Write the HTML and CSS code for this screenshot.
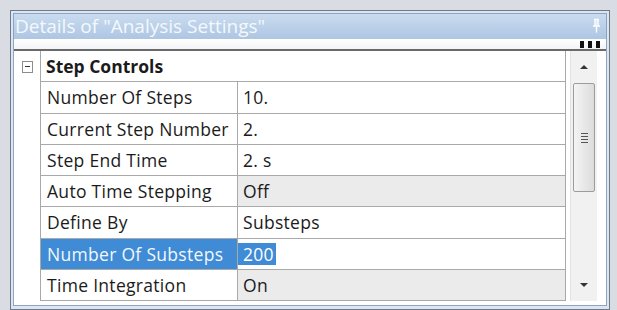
FILE: index.html
```html
<!DOCTYPE html>
<html>
<head>
<meta charset="utf-8">
<link rel="stylesheet" href="styles.css">
</head>
<body>
<div class="frame">
  <div class="panel">
    <div class="titlebar">
      <span class="title">Details of "Analysis Settings"</span>
      <svg class="pin" width="9" height="15" viewBox="0 0 9 15"><path d="M2 1.5h5M3 1.5v6M6 1.5v6M1 8h7M4.5 8v6.5" stroke="#fff" stroke-width="1.4" fill="none"/><path d="M3.5 2h2v5.5h-2z" fill="#fff" opacity="0.5"/></svg>
    </div>
    <div class="toolstrip">
      <div class="handle"><i></i><i></i><i></i></div>
    </div>
    <div class="divider"></div>
    <div class="body">
      <div class="grid">
        <div class="gutter"><span class="toggle"></span></div>
        <div class="group">Step Controls</div>

        <div class="gutter"></div>
        <div class="name">Number Of Steps</div>
        <div class="value">10.</div>

        <div class="gutter"></div>
        <div class="name">Current Step Number</div>
        <div class="value">2.</div>

        <div class="gutter"></div>
        <div class="name">Step End Time</div>
        <div class="value">2. s</div>

        <div class="gutter"></div>
        <div class="name">Auto Time Stepping</div>
        <div class="value ro">Off</div>

        <div class="gutter"></div>
        <div class="name">Define By</div>
        <div class="value">Substeps</div>

        <div class="gutter"></div>
        <div class="name sel">Number Of Substeps</div>
        <div class="value"><span class="hl">200</span></div>

        <div class="gutter"></div>
        <div class="name">Time Integration</div>
        <div class="value ro">On</div>
      </div>
      <div class="scrollbar">
        <div class="arrow up"></div>
        <div class="track">
          <div class="thumb"><span class="grip"></span></div>
        </div>
        <div class="arrow down"></div>
      </div>
    </div>
  </div>
</div>
</body>
</html>
```

FILE: styles.css
```css
html, body {
  margin: 0;
  padding: 0;
}
body {
  width: 617px;
  height: 310px;
  background: #d9dde3;
  overflow: hidden;
  font-family: "Open Sans", "Noto Sans", sans-serif;
}
.frame {
  margin: 10px 0 0 10px;
  width: 594px;
  height: 293px;
  border: 1px solid #6e7a8a;
  background: #dce6f2;
  padding: 2px 2px 3px 2px;
}
.panel {
  height: 100%;
  box-sizing: border-box;
  border: 1px solid #8fa4c0;
  background: #fff;
  display: flex;
  flex-direction: column;
}
.titlebar {
  height: 25px;
  flex: none;
  background: linear-gradient(#c9dbef, #aec6e3);
  display: flex;
  align-items: center;
  justify-content: space-between;
  padding: 0 5px 0 1px;
}
.title {
  color: #f4f8fc;
  font-size: 19px;
  line-height: 25px;
}
.pin {
  margin-top: -3px;
}
.toolstrip {
  height: 10px;
  flex: none;
  background: linear-gradient(#ffffff, #f2f4f7);
  display: flex;
  justify-content: flex-end;
  align-items: flex-end;
  padding-right: 6px;
}
.handle {
  display: flex;
  gap: 4px;
  padding-bottom: 1px;
}
.handle i {
  display: block;
  width: 4px;
  height: 7px;
  background: #111;
}
.divider {
  height: 2px;
  flex: none;
  background: #6a6a6a;
}
.body {
  flex: 1;
  display: flex;
  padding-bottom: 4px;
}
.grid {
  width: 552px;
  display: grid;
  grid-template-columns: 26px 197px 1fr;
  grid-template-rows: repeat(8, 1fr);
  font-size: 17.5px;
  letter-spacing: 0.3px;
  color: #1b1b1b;
}
.gutter {
  background: #fff;
  display: flex;
  align-items: center;
  justify-content: center;
}
.toggle {
  width: 9px;
  height: 10px;
  border: 1px solid #8d8d8d;
  position: relative;
  margin-left: 1px;
}
.toggle::after {
  content: "";
  position: absolute;
  left: 2px;
  right: 2px;
  top: 4px;
  height: 1px;
  background: #333;
}
.group {
  grid-column: 2 / 4;
  border-left: 1px solid #a9a9a9;
  border-right: 1px solid #a9a9a9;
  border-bottom: 1px solid #a9a9a9;
  font-weight: bold;
  letter-spacing: 0;
  display: flex;
  align-items: center;
  padding-left: 5px;
}
.name, .value {
  border-left: 1px solid #a9a9a9;
  border-bottom: 1px solid #a9a9a9;
  display: flex;
  align-items: center;
  padding-left: 6px;
  white-space: nowrap;
}
.value {
  border-right: 1px solid #a9a9a9;
  padding-left: 5px;
}
.ro {
  background: #ebebeb;
}
.sel {
  background: #3f8bd6;
  color: #f2f7fd;
}
.hl {
  background: #3f8bd6;
  color: #fff;
  margin-left: -5px;
  padding: 0 2px 0 5px;
  line-height: 22px;
}
.scrollbar {
  width: 27px;
  margin-left: 4px;
  background: #f1f1f1;
  border-left: 1px solid #e2e2e2;
  box-sizing: border-box;
  display: flex;
  flex-direction: column;
}
.arrow {
  height: 32px;
  flex: none;
  display: flex;
  align-items: center;
  justify-content: center;
}
.arrow::before {
  content: "";
  width: 0;
  height: 0;
  border-left: 4px solid transparent;
  border-right: 4px solid transparent;
}
.up::before {
  border-bottom: 4px solid #333;
}
.down::before {
  border-top: 4px solid #333;
}
.track {
  flex: 1;
  padding: 0 2px;
}
.thumb {
  height: 107px;
  border: 1px solid #9c9c9c;
  border-radius: 2px;
  background: linear-gradient(90deg, #f4f4f4, #e6e6e6 60%, #dcdcdc);
  display: flex;
  align-items: center;
  justify-content: center;
}
.grip {
  width: 7px;
  height: 10px;
  background: repeating-linear-gradient(#555 0 1px, transparent 1px 3px);
}
```
